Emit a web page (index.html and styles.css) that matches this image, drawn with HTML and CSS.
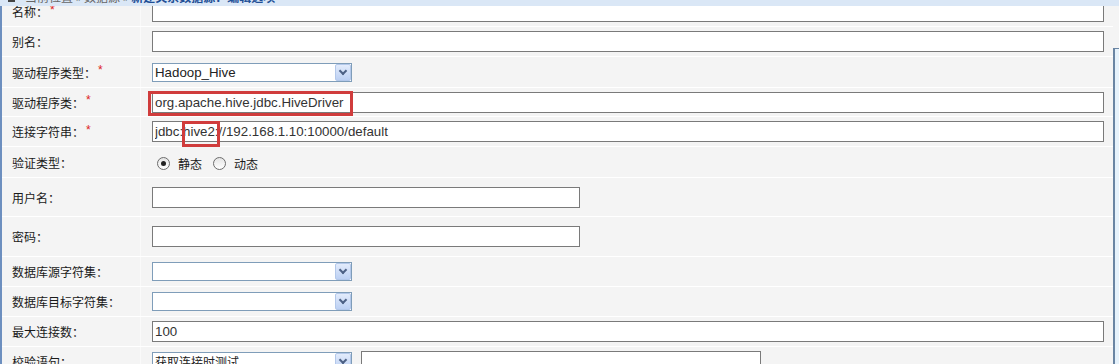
FILE: index.html
```html
<!DOCTYPE html>
<html lang="zh-CN">
<head>
    <meta charset="UTF-8">
    <title>新建关系数据源</title>
    <link rel="stylesheet" href="styles.css">
</head>
<body>
    <div class="crumb">
        <div class="crumb-line"><span class="crumb-icon"></span>当前位置 » 数据源 » <b>新建关系数据源：编辑选项</b></div>
    </div>

    <div class="frame">
        <div class="main">
            <div class="form">
                <div class="row r30">
                    <div class="label">名称：<i>*</i></div>
                    <div class="field"><input class="text wide" type="text"></div>
                </div>
                <div class="row r30">
                    <div class="label">别名：</div>
                    <div class="field"><input class="text wide" type="text"></div>
                </div>
                <div class="row r31">
                    <div class="label">驱动程序类型：<i>*</i></div>
                    <div class="field">
                        <div class="select"><span>Hadoop_Hive</span><b class="arrow"></b></div>
                    </div>
                </div>
                <div class="row r29">
                    <div class="label">驱动程序类：<i>*</i></div>
                    <div class="field marked">
                        <input class="text wide" type="text" value="org.apache.hive.jdbc.HiveDriver">
                        <span class="mark mark-class"></span>
                    </div>
                </div>
                <div class="row r30">
                    <div class="label">连接字符串：<i>*</i></div>
                    <div class="field marked">
                        <input class="text wide" type="text" value="jdbc:hive2://192.168.1.10:10000/default">
                        <span class="mark mark-url"></span>
                    </div>
                </div>
                <div class="row r31">
                    <div class="label">验证类型：</div>
                    <div class="field radios">
                        <span class="radio checked"></span><span class="opt">静态</span>
                        <span class="radio"></span><span class="opt">动态</span>
                    </div>
                </div>
                <div class="row r39">
                    <div class="label">用户名：</div>
                    <div class="field"><input class="text half" type="text"></div>
                </div>
                <div class="row r40">
                    <div class="label">密码：</div>
                    <div class="field"><input class="text half" type="password"></div>
                </div>
                <div class="row r30">
                    <div class="label">数据库源字符集：</div>
                    <div class="field">
                        <div class="select"><span></span><b class="arrow"></b></div>
                    </div>
                </div>
                <div class="row r30">
                    <div class="label">数据库目标字符集：</div>
                    <div class="field">
                        <div class="select"><span></span><b class="arrow"></b></div>
                    </div>
                </div>
                <div class="row r30">
                    <div class="label">最大连接数：</div>
                    <div class="field"><input class="text wide" type="text" value="100"></div>
                </div>
                <div class="row r30 last">
                    <div class="label">校验语句：</div>
                    <div class="field">
                        <div class="select"><span class="cn">获取连接时测试</span><b class="arrow"></b></div>
                        <input class="text sql" type="text">
                    </div>
                </div>
            </div>
        </div>
        <div class="side"></div>
    </div>
</body>
</html>
```

FILE: styles.css
```css
body {
    margin: 0;
    background-color: #f4f4f4;
    font-family: "Noto Sans CJK SC", "Liberation Sans", sans-serif;
    font-size: 12px;
    color: #1a1a1a;
    overflow: hidden;
    height: 364px;
}
.crumb {
    height: 6px;
    overflow: hidden;
    background-color: #dae7f6;
}
.crumb-line {
    margin-top: -14px;
    height: 22px;
    line-height: 22px;
    padding-left: 8px;
    color: #666;
    white-space: nowrap;
}
.crumb-line b {
    color: #1f4f96;
}
.crumb-icon {
    display: inline-block;
    width: 7px;
    height: 7px;
    background-color: #444;
    margin-right: 10px;
}
.frame {
    display: flex;
    height: 358px;
    overflow: hidden;
}
.main {
    width: 1111px;
    border-left: 2px solid #6d8fbf;
    overflow: hidden;
}
.form {
    margin-top: -9px;
    background-color: #fff;
}
.side {
    flex: 1;
    margin-top: 42px;
    border-left: 2px solid #6a85a3;
    border-top: 1px solid #6a85a3;
    background-color: #e6f2fb;
}
.row {
    display: flex;
    box-sizing: border-box;
    border-bottom: 1px solid #fff;
    background-color: #f4f4f4;
}
.r29 { height: 29px; }
.r30 { height: 30px; }
.r31 { height: 31px; }
.r39 { height: 39px; }
.r40 { height: 40px; }
.label {
    width: 128px;
    padding-left: 10px;
    border-right: 1px solid #fafafa;
    display: flex;
    align-items: center;
    white-space: nowrap;
}
.label i {
    font-style: normal;
    font-family: "Liberation Sans", sans-serif;
    color: #d22;
    margin-left: 2px;
    margin-top: -4px;
}
.field {
    flex: 1;
    padding-left: 11px;
    display: flex;
    align-items: center;
}
.radios {
    padding-top: 3px;
}
.marked {
    position: relative;
}
.text {
    box-sizing: border-box;
    height: 21px;
    margin: 0;
    padding: 0 2px;
    border: 1px solid #7a7a7a;
    background-color: #fff;
    font-family: "Liberation Sans", sans-serif;
    font-size: 13.3px;
    color: #333;
    outline: none;
}
.wide { width: 952px; }
.half { width: 428px; }
.sql {
    width: 400px;
    margin-left: 9px;
}
.select {
    box-sizing: border-box;
    width: 200px;
    height: 19px;
    border: 1px solid #7f9db9;
    background-color: #fff;
    display: flex;
    align-items: center;
    justify-content: space-between;
    padding-left: 2px;
    font-family: "Liberation Sans", sans-serif;
    font-size: 13.3px;
    color: #222;
}
.select .cn {
    font-family: "Noto Sans CJK SC", sans-serif;
    font-size: 12px;
}
.arrow {
    box-sizing: border-box;
    width: 16px;
    height: 17px;
    border: 1px solid #b3c8ea;
    border-radius: 2px;
    background: linear-gradient(#e3ecfc, #bcd0f3);
    position: relative;
}
.arrow::after {
    content: "";
    position: absolute;
    left: 4px;
    top: 3px;
    width: 4px;
    height: 4px;
    border-right: 2px solid #4d6185;
    border-bottom: 2px solid #4d6185;
    transform: rotate(45deg);
}
.radio {
    box-sizing: border-box;
    width: 13px;
    height: 13px;
    border: 1px solid #6c6c6c;
    border-radius: 50%;
    background: linear-gradient(#e4e4e4, #fff);
    margin-left: 5px;
    position: relative;
}
.radio.checked::after {
    content: "";
    position: absolute;
    left: 3px;
    top: 3px;
    width: 5px;
    height: 5px;
    border-radius: 50%;
    background-color: #222;
}
.opt {
    margin-left: 8px;
    margin-right: 6px;
}
.mark {
    position: absolute;
    box-sizing: border-box;
    border: 3px solid #d03c3c;
}
.mark-class {
    left: 7px;
    top: 3px;
    width: 205px;
    height: 25px;
}
.mark-url {
    left: 41px;
    top: 4px;
    width: 38px;
    height: 26px;
}
```
